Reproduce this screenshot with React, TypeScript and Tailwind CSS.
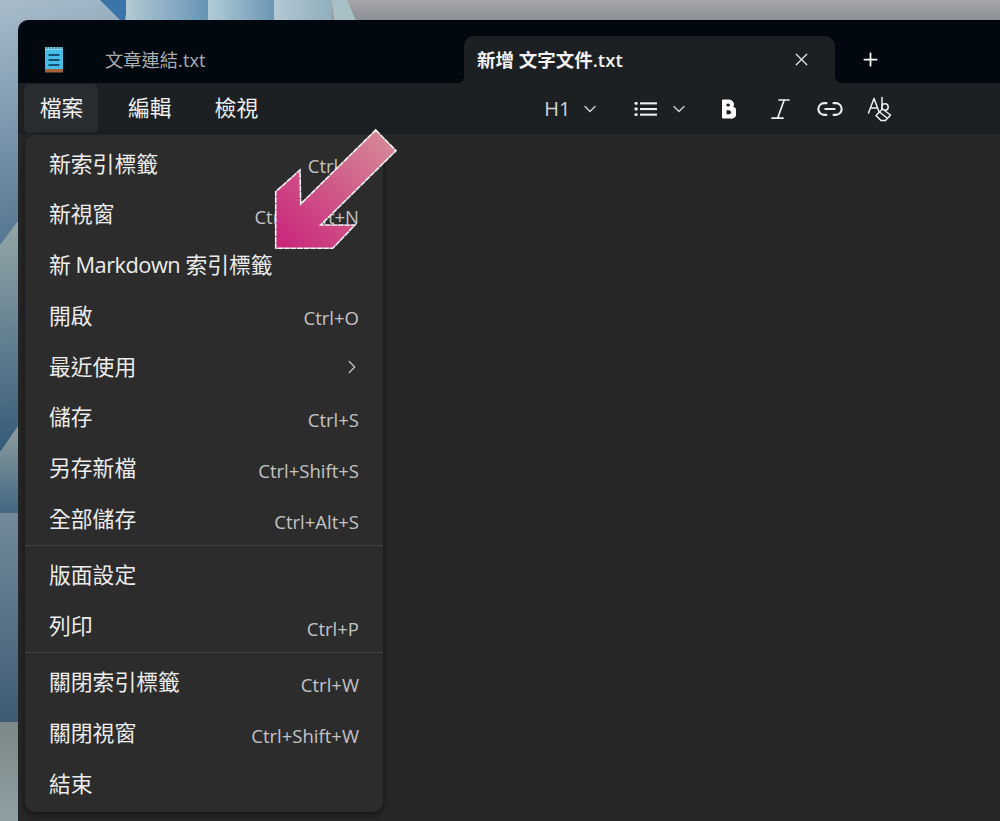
import React from "react";
import { ChevronRight, X, Plus, Link2 } from "lucide-react";

const cjk = '"Open Sans","Noto Sans CJK TC",sans-serif';

type Item = { label: React.ReactNode; key: string; shortcut?: string; arrow?: boolean };
const groups: Item[][] = [
  [
    { key: "a", label: "新索引標籤", shortcut: "Ctrl+T" },
    { key: "b", label: "新視窗", shortcut: "Ctrl+Shift+N" },
    { key: "c", label: <><span className="tracking-[-0.5px]">新 Markdown </span>索引標籤</> },
    { key: "d", label: "開啟", shortcut: "Ctrl+O" },
    { key: "e", label: "最近使用", arrow: true },
    { key: "f", label: "儲存", shortcut: "Ctrl+S" },
    { key: "g", label: "另存新檔", shortcut: "Ctrl+Shift+S" },
    { key: "h", label: "全部儲存", shortcut: "Ctrl+Alt+S" },
  ],
  [
    { key: "i", label: "版面設定" },
    { key: "j", label: "列印", shortcut: "Ctrl+P" },
  ],
  [
    { key: "k", label: "關閉索引標籤", shortcut: "Ctrl+W" },
    { key: "l", label: "關閉視窗", shortcut: "Ctrl+Shift+W" },
    { key: "m", label: "結束" },
  ],
];

function Wallpaper() {
  const L = (id: string, x1: number, y1: number, x2: number, y2: number, a: string, b: string) => (
    <linearGradient id={id} gradientUnits="userSpaceOnUse" x1={x1} y1={y1} x2={x2} y2={y2}>
      <stop offset="0" stopColor={a} />
      <stop offset="1" stopColor={b} />
    </linearGradient>
  );
  return (
    <svg className="absolute inset-0 h-full w-full blur-[0.7px]" viewBox="0 0 1000 821" preserveAspectRatio="none">
      <defs>
        {L("w0", 0, 0, 60, 240, "#a8bccb", "#527390")}
        {L("w1", 126, 0, 208, 0, "#b4c9d4", "#6494b6")}
        {L("w2", 208, 0, 272, 0, "#b2ccd7", "#6d98b5")}
        {L("w3", 272, 0, 334, 0, "#b4cad3", "#8fadbc")}
        {L("w4", 0, 0, 0, 21, "#a5a7ac", "#8b8e93")}
        {L("w5", 0, 225, 18, 445, "#93a6a7", "#365c7b")}
        {L("w6", 0, 430, 0, 515, "#8c9c9f", "#3f6581")}
        {L("w7", 0, 513, 0, 722, "#728a9a", "#3f5b74")}
        {L("w8", 0, 722, 0, 821, "#7d8789", "#8fa1a3")}
      </defs>
      <rect width="1000" height="821" fill="url(#w4)" />
      <rect x="0" y="0" width="130" height="260" fill="url(#w0)" />
      <polygon points="100,0 128,0 125,20 120,20" fill="#3b74a9" />
      <rect x="126" y="0" width="82" height="21" fill="url(#w1)" />
      <rect x="208" y="0" width="66" height="21" fill="url(#w2)" />
      <rect x="274" y="0" width="58" height="21" fill="url(#w3)" />
      <polygon points="332,0 347,0 356,21 334,21" fill="#a9c0c6" />
      <polygon points="0,245 18,221 18,430 0,455" fill="url(#w5)" />
      <polygon points="0,452 18,426 18,515 0,515" fill="url(#w6)" />
      <rect x="0" y="513" width="18" height="210" fill="url(#w7)" />
      <rect x="0" y="722" width="18" height="99" fill="url(#w8)" />
    </svg>
  );
}

function NotepadIcon() {
  return (
    <svg width="20" height="28" viewBox="0 0 20 28">
      <rect x="1" y="1" width="18" height="25" fill="#45bde6" />
      <rect x="1" y="1" width="18" height="3" fill="#7fd8f2" />
      <path d="M3 1v2M6 1v2M9 1v2M12 1v2M15 1v2M18 1v2" stroke="#123" strokeWidth="0.8" />
      <rect x="4.5" y="8" width="11" height="2" fill="#17506f" />
      <rect x="4.5" y="13" width="11" height="2" fill="#17506f" />
      <rect x="4.5" y="18" width="11" height="2" fill="#17506f" />
      <rect x="1" y="23" width="18" height="3.5" fill="#a5623a" />
    </svg>
  );
}

function Chevron() {
  return (
    <svg width="14" height="10" viewBox="0 0 14 10" fill="none" stroke="#c9c9c9" strokeWidth="1.5" strokeLinecap="round" strokeLinejoin="round">
      <path d="M2 2.5 7 7.5 12 2.5" />
    </svg>
  );
}

function ListIcon() {
  return (
    <svg width="24" height="18" viewBox="0 0 24 18" fill="#f0f0f0">
      <rect x="0.5" y="2" width="3.2" height="2.8" rx="1" />
      <rect x="0.5" y="7.6" width="3.2" height="2.8" rx="1" />
      <rect x="0.5" y="13.2" width="3.2" height="2.8" rx="1" />
      <rect x="6" y="2.3" width="17" height="2.1" />
      <rect x="6" y="8" width="17" height="2.1" />
      <rect x="6" y="13.6" width="17" height="2.1" />
    </svg>
  );
}

function BoldB() {
  return (
    <svg width="16" height="22" viewBox="0 0 16 22">
      <path
        d="M2.5 2H9a4.4 4.4 0 0 1 3.7 6.9A5 5 0 0 1 9.5 20h-7z M6 5.2v3.7h2.6a1.85 1.85 0 0 0 0-3.7z M6 11.8v5h3a2.5 2.5 0 0 0 0-5z"
        fill="#fff"
        stroke="#fff"
        strokeWidth="1"
        strokeLinejoin="round"
        fillRule="evenodd"
      />
    </svg>
  );
}

function ItalicIcon() {
  return (
    <svg width="20" height="22" viewBox="0 0 20 22" fill="none" stroke="#eeeeee" strokeWidth="1.7" strokeLinecap="round">
      <path d="M9 2h10M2 20.2h11M14.2 2 7.6 20.2" />
    </svg>
  );
}

function SpellIcon() {
  return (
    <svg width="26" height="26" viewBox="0 0 26 26" fill="none" stroke="#eeeeee" strokeWidth="1.5" strokeLinecap="round" strokeLinejoin="round">
      <path d="M1.5 17 7 2.5 12.5 17M3.6 12h6.8" />
      <path d="M15 1.5v13" />
      <circle cx="18" cy="11" r="3.2" />
      <path d="m9 19.5 6.5-6.5 8 6-5 5.5h-4.5z" fill="#1c2023" />
      <path d="m12.5 16 7.5 6" />
    </svg>
  );
}

export default function App() {
  return (
    <div className="relative flex h-[821px] w-[1000px] flex-col overflow-hidden pl-[18px] pt-[20px]" style={{ fontFamily: cjk }}>
      <Wallpaper />
      <div className="relative flex flex-1 flex-col overflow-hidden rounded-tl-[10px]">
        {/* title bar */}
        <div className="flex h-[63px] shrink-0 items-end bg-[#01080f]">
          <div className="flex h-[47px] w-[446px] items-center">
            <div className="ml-[26px] flex w-[61px] shrink-0 items-center">
              <NotepadIcon />
            </div>
            <span className="text-[18.3px] text-[#a9adb0]">文章連結.txt</span>
          </div>
          <div className="relative flex h-[47px] w-[371px] items-center justify-between rounded-t-[10px] bg-[#1c2023] pl-[13px] pr-[23px]">
            <div className="absolute bottom-0 left-[-6px] h-[6px] w-[6px] bg-[radial-gradient(circle_at_0_0,transparent_6px,#1c2023_6px)]" />
            <div className="absolute bottom-0 right-[-6px] h-[6px] w-[6px] bg-[radial-gradient(circle_at_100%_0,transparent_6px,#1c2023_6px)]" />
            <span className="text-[18.5px] font-semibold text-[#f2f2f2]">新增 文字文件.txt</span>
            <X size={21} strokeWidth={1.5} className="text-[#e6e6e6]" />
          </div>
          <div className="ml-[25px] flex h-[47px] items-center">
            <Plus size={21} strokeWidth={2} className="text-white" />
          </div>
        </div>
        {/* toolbar */}
        <div className="flex h-[51px] shrink-0 items-center bg-[#1c2023] pl-[6px] text-[21.8px] text-[#f0f0f0]">
          <div className="flex h-[49px] w-[74px] items-center justify-center rounded-md bg-[#2a2d30] pl-[1px]">檔案</div>
          <div className="ml-[30px]">編輯</div>
          <div className="ml-[43px]">檢視</div>
          <div className="ml-[286px] w-[25px] text-[20px] text-[#d4d4d4]">H1</div>
          <div className="ml-[14px] flex"><Chevron /></div>
          <div className="ml-[37px] flex"><ListIcon /></div>
          <div className="ml-[13.5px] flex"><Chevron /></div>
          <div className="ml-[34px] flex"><BoldB /></div>
          <div className="ml-[34.5px] flex"><ItalicIcon /></div>
          <Link2 size={28} strokeWidth={1.8} className="ml-[26px] text-[#eeeeee]" />
          <div className="ml-[23px] flex"><SpellIcon /></div>
        </div>
        {/* editor */}
        <div className="flex-1 bg-[#272727]" />
        {/* menu */}
        <div className="absolute left-[7px] top-[115px] w-[358px] rounded-[10px] bg-[#2c2c2c] pb-[3px] pt-[3px] shadow-[0_2px_8px_rgba(0,0,0,0.5)]">
          {groups.map((g, i) => (
            <div key={i} className={(i > 0 ? "border-t border-[#414141] pt-[3.5px] " : "") + (i < 2 ? "pb-[1px]" : "")}>
              {g.map((it) => (
                <div key={it.key} className="flex h-[50.8px] items-center justify-between px-[24px]">
                  <span className="text-[21.8px] leading-none text-[#ededed]">{it.label}</span>
                  {it.shortcut && <span className="pt-[5px] text-[18.5px] text-[#c4c4c4]">{it.shortcut}</span>}
                  {it.arrow && <ChevronRight size={22} strokeWidth={1.4} className="mr-[-4px] text-[#c4c4c4]" />}
                </div>
              ))}
            </div>
          ))}
        </div>
      </div>
      {/* annotation arrow */}
      <svg className="absolute left-[270px] top-[125px]" width="132" height="130" viewBox="270 125 132 130">
        <defs>
          <linearGradient id="arr" x1="396" y1="130" x2="276" y2="248" gradientUnits="userSpaceOnUse">
            <stop offset="0" stopColor="#d69098" />
            <stop offset="1" stopColor="#c9237a" />
          </linearGradient>
        </defs>
        <polygon
          points="375.7,130 396,150.7 320.7,225 355,225 332.7,248.3 275.7,248.3 275.7,191.7 300,170 300.7,204"
          fill="url(#arr)"
          stroke="#f4f4f4"
          strokeWidth="1.6"
          strokeDasharray="6 0.6"
        />
      </svg>
    </div>
  );
}
